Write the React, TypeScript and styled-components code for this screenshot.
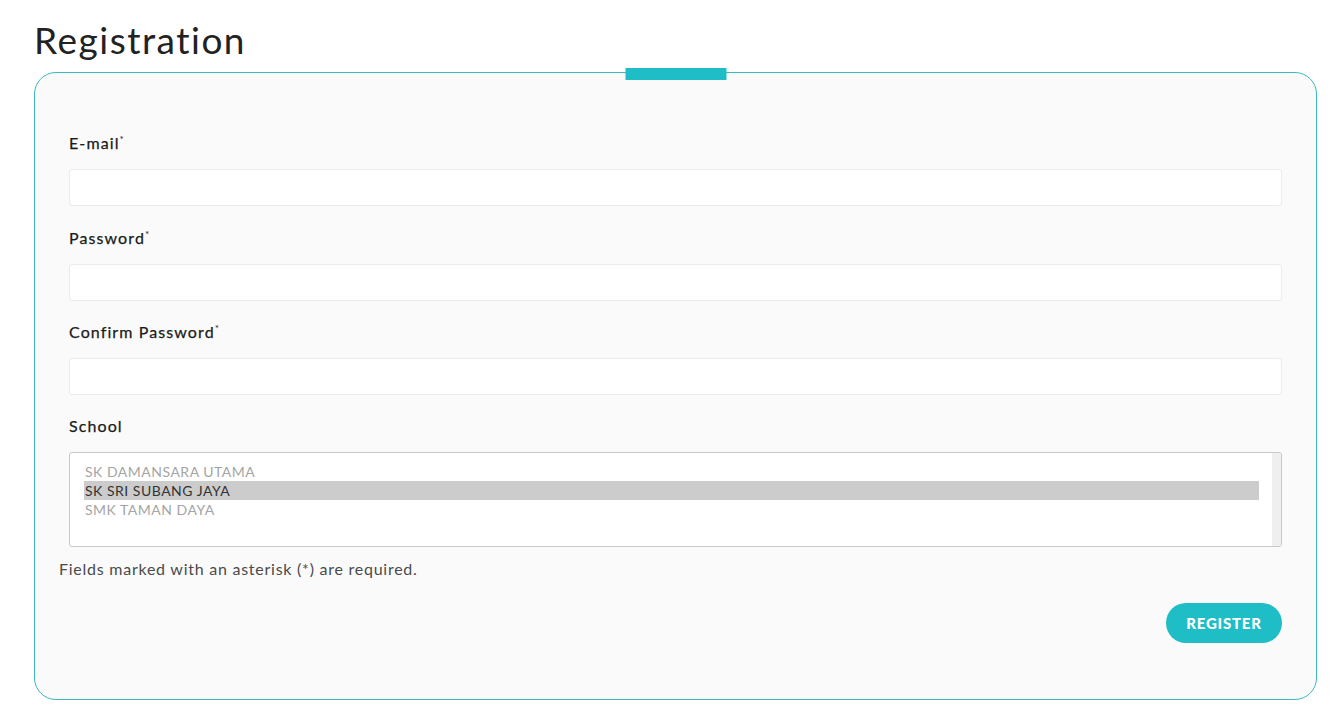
import React from "react";
import styled, { createGlobalStyle } from "styled-components";

const GlobalStyle = createGlobalStyle`
  html, body { margin: 0; padding: 0; background: #ffffff; }
  body { font-family: Lato, "Open Sans", sans-serif; color: #222; }
  * { box-sizing: border-box; }
`;

const Page = styled.div`
  padding: 16px 22px 13px 34px;
`;

const Title = styled.h1`
  margin: 0 0 8px 0;
  font-family: Lato, sans-serif;
  font-weight: 400;
  font-size: 37px;
  line-height: 48px;
  color: #222;
  letter-spacing: 1.5px;
`;

const Card = styled.form`
  position: relative;
  border: 1px solid #3bb9bd;
  border-radius: 22px;
  background: #fafafa;
  padding: 60px 34px 56px 34px;
  display: flex;
  flex-direction: column;
`;

/* teal marker sitting on the top border */
const Tab = styled.span`
  position: absolute;
  top: -5px;
  left: 50%;
  transform: translateX(-50%);
  width: 101px;
  height: 12px;
  background: #1fbdc6;
`;

const Field = styled.div<{ $gap: number }>`
  display: flex;
  flex-direction: column;
  margin-bottom: ${(p) => p.$gap}px;
`;

const Label = styled.label`
  font-size: 16px;
  line-height: 20px;
  font-weight: 400;
  color: #1a1a1a;
  -webkit-text-stroke: 0.25px #1a1a1a;
  margin-bottom: 16px;
  letter-spacing: 1.1px;
  sup {
    font-size: 10px;
    font-weight: 400;
    -webkit-text-stroke: 0;
    vertical-align: 6px;
    line-height: 0;
  }
`;

const Input = styled.input`
  height: 37px;
  border: 1px solid #ebebeb;
  border-radius: 3px;
  background: #fff;
  padding: 0 12px;
  font: inherit;
  outline: none;
`;

const ListBox = styled.div`
  height: 95px;
  border: 1px solid #c8c8c8;
  border-radius: 3px;
  background: #fff;
  display: flex;
  overflow: hidden;
`;

const Options = styled.ul`
  flex: 1;
  list-style: none;
  margin: 0;
  padding: 9px 13px 0 14px;
`;

const Option = styled.li<{ $selected?: boolean }>`
  height: 19px;
  line-height: 19px;
  padding-left: 1px;
  font-size: 14px;
  font-family: Lato, sans-serif;
  color: ${(p) => (p.$selected ? "#333" : "#a5a5a5")};
  background: ${(p) => (p.$selected ? "#cccccc" : "transparent")};
  letter-spacing: 0.5px;
`;

const Track = styled.div`
  width: 9px;
  background: #efefef;
`;

const Help = styled.p`
  margin: 12px 0 0 -10px;
  font-size: 16px;
  line-height: 20px;
  font-weight: 400;
  color: #4a4a4a;
  letter-spacing: 0.75px;
`;

const Actions = styled.div`
  display: flex;
  justify-content: flex-end;
  margin-top: 24px;
`;

const Button = styled.button`
  height: 40px;
  width: 116px;
  border: none;
  border-radius: 20px;
  background: #1fbdc6;
  color: #fff;
  font-family: Lato, sans-serif;
  font-weight: 900;
  font-size: 15px;
  letter-spacing: 0.8px;
  padding: 0;
  cursor: pointer;
`;

const schools = ["SK DAMANSARA UTAMA", "SK SRI SUBANG JAYA", "SMK TAMAN DAYA"];

export default function App() {
  return (
    <>
      <GlobalStyle />
      <Page>
        <Title>Registration</Title>
        <Card onSubmit={(e) => e.preventDefault()}>
          <Tab />
          <Field $gap={22}>
            <Label>
              E-mail<sup>*</sup>
            </Label>
            <Input type="email" />
          </Field>
          <Field $gap={21}>
            <Label>
              Password<sup>*</sup>
            </Label>
            <Input type="password" />
          </Field>
          <Field $gap={21}>
            <Label>
              Confirm Password<sup>*</sup>
            </Label>
            <Input type="password" />
          </Field>
          <Field $gap={0}>
            <Label>School</Label>
            <ListBox role="listbox">
              <Options>
                {schools.map((s) => (
                  <Option key={s} $selected={s === "SK SRI SUBANG JAYA"}>
                    {s}
                  </Option>
                ))}
              </Options>
              <Track />
            </ListBox>
          </Field>
          <Help>Fields marked with an asterisk (*) are required.</Help>
          <Actions>
            <Button type="submit">REGISTER</Button>
          </Actions>
        </Card>
      </Page>
    </>
  );
}
